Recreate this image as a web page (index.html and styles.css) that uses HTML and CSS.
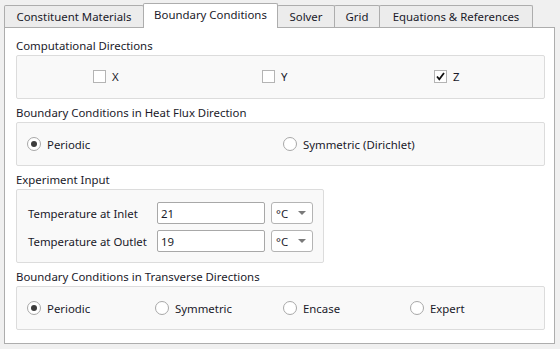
FILE: index.html
```html
<!DOCTYPE html>
<html lang="en">
  <head>
    <meta charset="UTF-8" />
    <meta name="viewport" content="width=device-width, initial-scale=1.0" />
    <title>Boundary Conditions</title>
    <link rel="stylesheet" href="styles.css">
  </head>
  <body>
    <div class="window">
      <div class="tabs">
        <div class="tab tab-materials">Constituent Materials</div>
        <div class="tab tab-boundary active">Boundary Conditions</div>
        <div class="tab tab-solver">Solver</div>
        <div class="tab tab-grid">Grid</div>
        <div class="tab tab-equations">Equations &amp; References</div>
      </div>

      <div class="panel">
        <div class="group-title">Computational Directions</div>
        <div class="group directions">
          <label class="option"><span class="check"></span>X</label>
          <label class="option"><span class="check"></span>Y</label>
          <label class="option">
            <span class="check checked">
              <svg width="11" height="11" viewBox="0 0 11 11">
                <path d="M2 5.5 L4.3 8.3 L9 2" fill="none" stroke="#111" stroke-width="1.8" />
              </svg>
            </span>Z
          </label>
        </div>

        <div class="group-title">Boundary Conditions in Heat Flux Direction</div>
        <div class="group heatflux">
          <label class="option"><span class="radio checked"></span>Periodic</label>
          <label class="option"><span class="radio"></span>Symmetric (Dirichlet)</label>
        </div>

        <div class="group-title">Experiment Input</div>
        <div class="group experiment">
          <div class="field">
            <span class="field-label">Temperature at Inlet</span>
            <input type="text" class="value" value="21" />
            <div class="unit">°C <span class="arrow"></span></div>
          </div>
          <div class="field">
            <span class="field-label">Temperature at Outlet</span>
            <input type="text" class="value" value="19" />
            <div class="unit">°C <span class="arrow"></span></div>
          </div>
        </div>

        <div class="group-title">Boundary Conditions in Transverse Directions</div>
        <div class="group transverse">
          <label class="option"><span class="radio checked"></span>Periodic</label>
          <label class="option"><span class="radio"></span>Symmetric</label>
          <label class="option"><span class="radio"></span>Encase</label>
          <label class="option"><span class="radio"></span>Expert</label>
        </div>
      </div>
    </div>
  </body>
</html>
```

FILE: styles.css
```css
body {
  margin: 0;
  background-color: #f0f0f0;
  font-family: "Noto Sans", "Open Sans", sans-serif;
  font-size: 11.4px;
  color: #1a1a2a;
}
.window {
  padding: 3px 0 0 4px;
}
.tabs {
  display: flex;
  align-items: flex-end;
  height: 24px;
}
.tab {
  box-sizing: border-box;
  height: 22px;
  line-height: 21px;
  text-align: center;
  background-color: #ececec;
  border: 1px solid #adadad;
  border-bottom: none;
  border-radius: 2px 2px 0 0;
  margin-left: -1px;
  white-space: nowrap;
}
.tab-materials {
  width: 140px;
  margin-left: 0;
}
.tab-boundary {
  width: 135px;
}
.tab-solver {
  width: 58px;
}
.tab-grid {
  width: 46px;
}
.tab-equations {
  width: 154px;
}
.tab.active {
  position: relative;
  z-index: 1;
  height: 25px;
  line-height: 21px;
  margin-bottom: -1px;
  background-color: white;
}
.panel {
  box-sizing: border-box;
  width: 551px;
  height: 317px;
  background-color: white;
  border: 1px solid #adadad;
  padding: 10px 10px 0 11px;
}
.group-title {
  height: 16px;
  line-height: 16px;
  margin-bottom: 1px;
}
.group {
  box-sizing: border-box;
  width: 529px;
  height: 44px;
  margin-bottom: 6px;
  background-color: #f9f9f9;
  border: 1px solid #dcdcdc;
  border-radius: 2px;
  display: grid;
  align-items: center;
}
.directions {
  grid-template-columns: 169px 172px auto;
  padding: 0 0 2px 76px;
}
.heatflux {
  grid-template-columns: 256px auto;
  padding-left: 10px;
}
.transverse {
  grid-template-columns: 128px 128px 127px auto;
  padding-left: 10px;
  margin-top: 1px;
}
.option {
  display: flex;
  align-items: center;
  gap: 6px;
  white-space: nowrap;
}
.check {
  box-sizing: border-box;
  display: flex;
  align-items: center;
  justify-content: center;
  width: 13px;
  height: 13px;
  background-color: white;
  border: 1px solid #b4b4b4;
}
.radio {
  box-sizing: border-box;
  display: flex;
  align-items: center;
  justify-content: center;
  width: 14px;
  height: 14px;
  border-radius: 50%;
  background-color: white;
  border: 1px solid #a8a8a8;
}
.radio.checked::after {
  content: "";
  width: 6px;
  height: 6px;
  border-radius: 50%;
  background-color: #3c3c3c;
}
.experiment {
  width: 308px;
  height: 74px;
  display: flex;
  flex-direction: column;
  align-items: stretch;
  gap: 6px;
  padding: 12px 0 0 11px;
}
.field {
  display: flex;
  align-items: center;
  height: 22px;
}
.field-label {
  width: 129px;
  white-space: nowrap;
}
.value {
  box-sizing: border-box;
  width: 108px;
  height: 22px;
  margin: 0;
  padding: 0 3px;
  border: 1px solid #a8a8a8;
  border-radius: 2px;
  font: inherit;
  color: inherit;
  outline: none;
}
.unit {
  box-sizing: border-box;
  display: flex;
  align-items: center;
  justify-content: space-between;
  width: 42px;
  height: 22px;
  margin-left: 6px;
  padding: 0 6px 0 4px;
  border: 1px solid #b4b4b4;
  border-radius: 3px;
  background-color: white;
}
.arrow {
  width: 0;
  height: 0;
  border-left: 4px solid transparent;
  border-right: 4px solid transparent;
  border-top: 4px solid #7a7a7a;
}
```
